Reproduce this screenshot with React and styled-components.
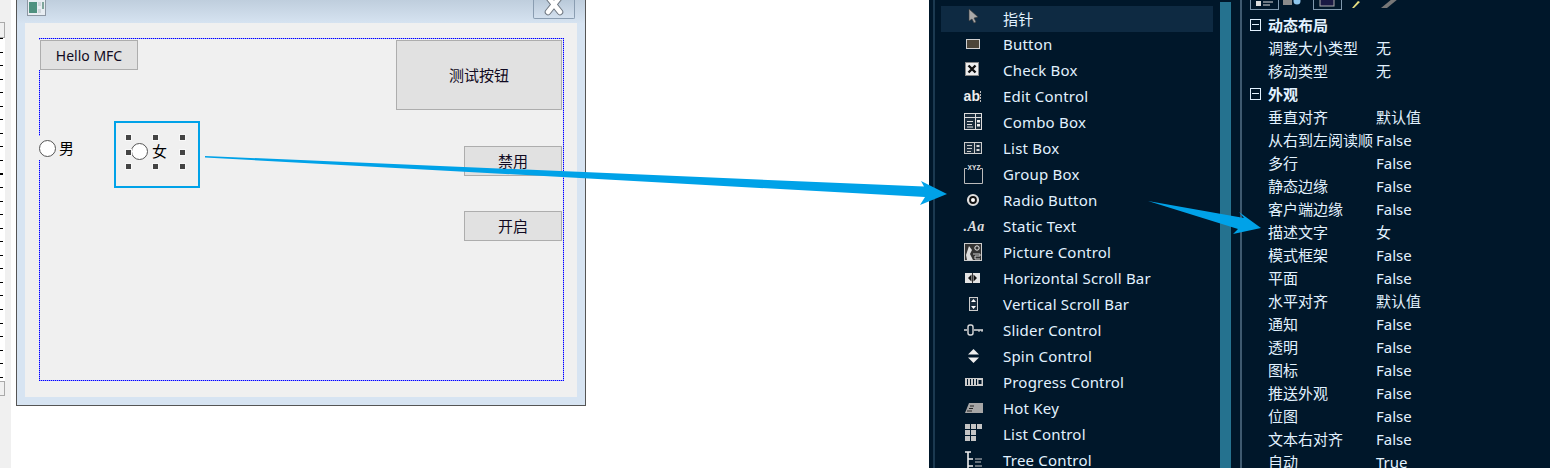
import React from "react";
import styled, { createGlobalStyle } from "styled-components";

const Global = createGlobalStyle`
  html, body { margin: 0; padding: 0; background: #fff; }
  body { font-family: "Noto Sans", "Noto Sans CJK SC", sans-serif; }
`;

const Page = styled.div`
  position: relative;
  display: flex;
  width: 1550px;
  height: 468px;
  overflow: hidden;
  background: #fff;
`;

/* ---------- designer ---------- */
const Designer = styled.div`
  display: flex;
  flex: 0 0 929px;
  height: 468px;
`;
const RulerColumn = styled.div`
  display: flex;
  flex-direction: column;
  flex: 0 0 11px;
  padding-top: 22px;
  box-sizing: border-box;
  background: #f0f0f0;
`;
const RulerEnd = styled.div`
  flex: 0 0 ${(p) => p.$h}px;
  width: 5px;
  box-sizing: border-box;
  border: 1px solid #a9a9a9;
  border-left: 0;
  background: #f0f0f0;
`;
const RulerTicks = styled.div`
  flex: 0 0 343px;
  width: 5px;
  background: repeating-linear-gradient(
    to bottom,
    #000 0, #000 1px, #fff 1px, #fff 13.55px
  ) 0 0 / 3px 100% no-repeat, #fff;
`;
const Gutter = styled.div`
  flex: 0 0 5px;
`;
const DialogWindow = styled.div`
  flex: 0 0 570px;
  height: 406px;
  box-sizing: border-box;
  border: 1px solid #555;
  border-top: 0;
  background: #d7e4f2;
  display: flex;
  flex-direction: column;
`;
const TitleBar = styled.div`
  flex: 0 0 23px;
  display: flex;
  justify-content: space-between;
  align-items: flex-start;
  padding: 0 10px 0 10px;
  background: linear-gradient(#bfcedd, #d6e3f1);
`;
const TitleIcon = styled.svg`
  display: block;
  width: 19px;
  height: 16px;
`;
const CloseButton = styled.div`
  width: 42px;
  height: 19px;
  box-sizing: border-box;
  border: 1px solid #8a9db1;
  border-top: 0;
  border-radius: 0 0 2px 2px;
  background: linear-gradient(#b9c9d9, #d3e0ee);
  overflow: hidden;
  display: flex;
  justify-content: center;
`;
const ClientArea = styled.div`
  position: relative;
  flex: 1;
  margin: 0 8px 8px;
  background: #f0f0f0;
`;
const dotsH = "repeating-linear-gradient(to right, #0000ff 0, #0000ff 1px, #9a9aff 1px, #9a9aff 2px)";
const dotsV = "repeating-linear-gradient(to bottom, #0000ff 0, #0000ff 1px, #9a9aff 1px, #9a9aff 2px)";
const Guide = styled.div`
  position: absolute;
  left: 14px;
  top: 15px;
  width: 525px;
  height: 343px;
  background:
    ${dotsH} 0 0 / 100% 1px no-repeat,
    ${dotsH} 0 100% / 100% 1px no-repeat,
    ${dotsV} 0 0 / 1px 100% no-repeat,
    ${dotsV} 100% 0 / 1px 100% no-repeat;
`;
const CtlButton = styled.div`
  position: absolute;
  left: ${(p) => p.$x - 25}px;
  top: ${(p) => p.$y - 23}px;
  width: ${(p) => p.$w}px;
  height: ${(p) => p.$h}px;
  box-sizing: border-box;
  border: 1px solid #adadad;
  background: #e1e1e1;
  display: flex;
  align-items: center;
  justify-content: center;
  color: #110a22;
  font-size: ${(p) => (p.$mask ? 14 : 15)}px;
  padding-bottom: ${(p) => (p.$mask ? 0 : 2)}px;
  ${(p) => (p.$mask ? "box-shadow: -1px 0 0 #f0f0f0;" : "")}
`;
const RadioCtl = styled.div`
  position: absolute;
  left: ${(p) => p.$x - 25}px;
  top: ${(p) => p.$y - 23}px;
  height: 24px;
  display: flex;
  align-items: center;
  gap: ${(p) => p.$gap}px;
  background: #f0f0f0;
  color: #000;
  font-size: 15px;
  line-height: 22px;
`;
const RadioDot = styled.span`
  width: 15px;
  height: 15px;
  border: 1px solid #555;
  border-radius: 50%;
  background: #fff;
  flex: none;
`;
const SelectionFrame = styled.div`
  position: absolute;
  left: 89px;
  top: 98px;
  width: 86px;
  height: 67px;
  box-sizing: border-box;
  border: 2px solid #00a2e8;
`;
const Handle = styled.span`
  position: absolute;
  left: ${(p) => p.$x - 116}px;
  top: ${(p) => p.$y - 123}px;
  width: 5px;
  height: 5px;
  background: #444;
  box-shadow: 0 0 0 1px #f8f8f8;
`;

/* ---------- dark panel ---------- */
const DarkPanel = styled.div`
  flex: 1;
  display: flex;
  height: 468px;
  background: #00172a;
  padding-left: 4px;
  color: #e2f2ff;
  font-size: 15px;
`;
const Stripe = styled.div`
  flex: 0 0 2px;
  background: ${(p) => p.$c};
`;
const ToolList = styled.div`
  flex: 0 0 272px;
  margin-left: 6px;
  padding-top: 6px;
`;
const ToolRow = styled.div`
  display: flex;
  align-items: center;
  height: 26px;
  box-sizing: border-box;
  padding-bottom: 2px;
  letter-spacing: 0.2px;
  background: ${(p) => (p.$active ? "#0e2a42" : "transparent")};
  white-space: nowrap;
`;
const ToolIcon = styled.svg`
  display: block;
  flex: none;
  width: 24px;
  height: 22px;
  margin: 0 18px 0 20px;
`;
const ScrollTrack = styled.div`
  flex: 0 0 11px;
  margin: 2px 9px 0 7px;
  background: #25728f;
`;
const Props = styled.div`
  flex: 1;
  min-width: 0;
`;
const PropToolbar = styled.div`
  height: 13px;
  padding-left: 8px;
  display: flex;
  align-items: flex-start;
  overflow: hidden;
`;
const PropRow = styled.div`
  display: grid;
  grid-template-columns: 26px 108px 1fr;
  align-items: center;
  height: 23px;
  white-space: nowrap;
`;
const MinusBox = styled.span`
  position: relative;
  justify-self: end;
  margin-right: 7px;
  width: 9px;
  height: 10px;
  border: 1px solid #e2f2ff;
  &::after {
    content: "";
    position: absolute;
    left: 1px;
    right: 1px;
    top: 4px;
    height: 1px;
    background: #e2f2ff;
  }
`;
const PropName = styled.span`
  grid-column: 2;
  font-weight: ${(p) => (p.$bold ? 700 : 400)};
  ${(p) => (p.$bold ? "grid-column: 2 / 4;" : "")}
`;
const PropValue = styled.span`
  grid-column: 3;
`;
const Overlay = styled.svg`
  position: absolute;
  left: 0;
  top: 0;
  pointer-events: none;
`;

const icons = {
  pointer: (
    <path d="M8 2 L8 14 L11 12 L13 16 L15 15 L13 11 L17 10 Z" fill="#a9a9a9" stroke="#3a3a3a" strokeWidth="0.6" />
  ),
  button: (
    <>
      <rect x="5" y="6" width="14" height="10" fill="#d0d0d0" />
      <rect x="6" y="7" width="12" height="8" fill="#4c4539" />
    </>
  ),
  check: (
    <>
      <rect x="4.5" y="3.5" width="13" height="13" fill="#eee" stroke="#888" />
      <path d="M7.5 6.5 L14.5 13.5 M14.5 6.5 L7.5 13.5" stroke="#111" strokeWidth="2.4" />
    </>
  ),
  edit: (
    <>
      <text x="2.5" y="16" fontSize="14" fontWeight="700" fontFamily="Liberation Sans, sans-serif" fill="#eee">ab</text>
      <path d="M19.5 6 V17" stroke="#bbb" strokeWidth="1" strokeDasharray="2 1" />
    </>
  ),
  combo: (
    <>
      <rect x="3.5" y="2.5" width="17" height="16" fill="#1a2c3c" stroke="#ddd" />
      <path d="M3 6.5 H21 M14.5 2 V19 M6 10.5 H12 M6 13.5 H11 M6 16 H12" stroke="#ddd" />
      <rect x="16" y="9" width="3" height="2.5" fill="#eee" />
      <rect x="16" y="13" width="3" height="2.5" fill="#eee" />
    </>
  ),
  list: (
    <>
      <rect x="3.5" y="5.5" width="17" height="11" fill="#1a2c3c" stroke="#ccc" />
      <path d="M13.5 5 V17 M6 8.5 H11 M6 11.5 H11 M6 14.5 H10" stroke="#ccc" />
      <rect x="15.5" y="8" width="3" height="2" fill="#ddd" />
      <rect x="15.5" y="12" width="3" height="2" fill="#ddd" />
    </>
  ),
  group: (
    <>
      <path d="M6 5.5 H3.5 V20.5 H21.5 V5.5 H19" fill="none" stroke="#bbb" />
      <text x="6.5" y="7" fontSize="6.5" fontWeight="700" fontFamily="Liberation Sans, sans-serif" fill="#e4e4e4">XYZ</text>
    </>
  ),
  radio: (
    <>
      <circle cx="12" cy="11" r="5" fill="#111" stroke="#ddd" strokeWidth="2.2" />
      <circle cx="12" cy="11" r="2" fill="#fff" />
    </>
  ),
  stat: (
    <text x="2.5" y="16" fontSize="14" fontWeight="700" fontStyle="italic" fontFamily="Liberation Serif, serif" fill="#ddd" letterSpacing="0.4">.Aa</text>
  ),
  picture: (
    <>
      <rect x="3.5" y="2.5" width="17" height="17" fill="#333" stroke="#ccc" />
      <path d="M5 14 L8 5 L11 9 L9 13 L12 19 H6 Z" fill="#ddd" />
      <circle cx="16" cy="7" r="2.2" fill="none" stroke="#eee" />
      <path d="M12 13 H19 V15 H14 V18 H19" stroke="#ccc" fill="none" />
    </>
  ),
  hscroll: (
    <>
      <rect x="4" y="6" width="15" height="10" fill="#e4e4e4" />
      <path d="M7 11 L10.5 7.5 V14.5 Z M16 11 L12.5 7.5 V14.5 Z" fill="#111" />
      <path d="M11.5 6 V16" stroke="#333" />
    </>
  ),
  vscroll: (
    <>
      <rect x="8.5" y="4.5" width="8" height="13" fill="#1a2c3c" stroke="#ccc" />
      <path d="M12.5 6 L15 9 H10 Z M12.5 16 L15 13 H10 Z" fill="#fff" />
    </>
  ),
  slider: (
    <>
      <path d="M3 11 H6 M13 11 H22" stroke="#ddd" strokeWidth="1.6" />
      <rect x="7" y="6" width="5" height="10" rx="2" fill="none" stroke="#ddd" strokeWidth="1.4" />
      <path d="M18 11 V13 M21 11 V13" stroke="#ddd" />
    </>
  ),
  spin: (
    <>
      <path d="M12.5 4 L18 9.5 H7 Z" fill="#eee" />
      <path d="M12.5 18 L18 12.5 H7 Z" fill="#eee" />
    </>
  ),
  progress: (
    <>
      <rect x="4" y="7" width="18" height="8" fill="#ccc" />
      <path d="M6.5 8 V14 M9.5 8 V14 M12.5 8 V14 M15.5 8 V14" stroke="#00172a" strokeWidth="1" />
      <rect x="17.5" y="9" width="3" height="4" fill="#00172a" />
    </>
  ),
  hotkey: (
    <>
      <path d="M8 6 H22 V16 H4 Z" fill="#a6a6a6" />
      <path d="M9 9 H13 M8 11.5 H12 M6 14 H11" stroke="#222" strokeWidth="1" />
    </>
  ),
  listctl: (
    <>
      {[4, 10, 16].map((x) =>
        [1, 7, 13].map((y) =>
          x === 16 && y > 1 ? null : <rect key={`${x}-${y}`} x={x} y={y} width="5" height="5" fill="#c4c4c4" />
        )
      )}
    </>
  ),
  tree: (
    <>
      <path d="M4 3 H10 M7 3 V22 M7 10 H12 M7 17 H12" stroke="#eee" strokeWidth="1.6" fill="none" />
      <path d="M14 10 H21 M14 13 H20 M14 17 H21" stroke="#ccc" />
    </>
  ),
};

const tools = [
  ["pointer", "指针"], ["button", "Button"], ["check", "Check Box"], ["edit", "Edit Control"],
  ["combo", "Combo Box"], ["list", "List Box"], ["group", "Group Box"], ["radio", "Radio Button"],
  ["stat", "Static Text"], ["picture", "Picture Control"], ["hscroll", "Horizontal Scroll Bar"],
  ["vscroll", "Vertical Scroll Bar"], ["slider", "Slider Control"], ["spin", "Spin Control"],
  ["progress", "Progress Control"], ["hotkey", "Hot Key"], ["listctl", "List Control"], ["tree", "Tree Control"],
];

const props = [
  ["动态布局"], ["调整大小类型", "无"], ["移动类型", "无"], ["外观"], ["垂直对齐", "默认值"],
  ["从右到左阅读顺", "False"], ["多行", "False"], ["静态边缘", "False"], ["客户端边缘", "False"],
  ["描述文字", "女"], ["模式框架", "False"], ["平面", "False"], ["水平对齐", "默认值"], ["通知", "False"],
  ["透明", "False"], ["图标", "False"], ["推送外观", "False"], ["位图", "False"], ["文本右对齐", "False"], ["自动", "True"],
];

const handles = [
  [126, 135], [153, 135], [180, 135],
  [126, 150], [180, 150],
  [126, 164], [153, 164], [180, 164],
];

export default function App() {
  return (
    <Page>
      <Global />
      <Designer>
        <RulerColumn>
          <RulerEnd $h={16} />
          <RulerTicks />
          <RulerEnd $h={15} />
        </RulerColumn>
        <Gutter />
        <DialogWindow>
          <TitleBar>
            <TitleIcon viewBox="0 0 19 16">
              <rect x="0.5" y="-2" width="18" height="17.5" fill="#e8edf2" stroke="#8d97a3" />
              <rect x="2" y="2" width="8" height="11" fill="#4f9180" />
              <rect x="11" y="2" width="3" height="4" fill="#cfd6dc" />
              <rect x="15" y="2" width="2" height="7" fill="#7ea59a" />
              <rect x="11" y="9" width="3" height="4" fill="#cfd6dc" />
            </TitleIcon>
            <CloseButton>
              <svg width="20" height="18" viewBox="0 0 20 18">
                <path d="M4 -3 L16 12 M16 -3 L4 12" stroke="#6f7780" strokeWidth="6.5" strokeLinecap="round" />
                <path d="M4 -3 L16 12 M16 -3 L4 12" stroke="#fff" strokeWidth="4.5" strokeLinecap="round" />
              </svg>
            </CloseButton>
          </TitleBar>
          <ClientArea>
            <Guide />
            <CtlButton $x={40} $y={40} $w={98} $h={30} $mask>Hello MFC</CtlButton>
            <CtlButton $x={396} $y={40} $w={166} $h={70}>测试按钮</CtlButton>
            <CtlButton $x={464} $y={146} $w={98} $h={30}>禁用</CtlButton>
            <CtlButton $x={464} $y={211} $w={98} $h={30}>开启</CtlButton>
            <RadioCtl $x={39} $y={136} $gap={3}><RadioDot />男</RadioCtl>
            <RadioCtl $x={131} $y={139} $gap={4}><RadioDot />女</RadioCtl>
            <SelectionFrame>
              {handles.map(([x, y]) => <Handle key={`${x}-${y}`} $x={x} $y={y} />)}
            </SelectionFrame>
          </ClientArea>
        </DialogWindow>
      </Designer>
      <DarkPanel>
        <Stripe $c="#1b3950" />
        <ToolList>
          {tools.map(([icon, label], i) => (
            <ToolRow key={label} $active={i === 0}>
              <ToolIcon viewBox="0 0 24 22">{icons[icon]}</ToolIcon>
              {label}
            </ToolRow>
          ))}
        </ToolList>
        <ScrollTrack />
        <Stripe $c="#3f5a70" />
        <Props>
          <PropToolbar>
            <svg width="160" height="13" viewBox="0 0 160 13">
              <rect x="0.5" y="-3" width="28" height="12.5" fill="none" stroke="#7f98ad" />
              <rect x="6" y="1" width="5" height="5" fill="#ddd" />
              <path d="M13 2 H23 M13 5 H20" stroke="#ddd" />
              <rect x="33" y="0" width="9" height="5" fill="#8a8a8a" />
              <circle cx="47" cy="1" r="3.5" fill="#8fc6ec" />
              <rect x="63.5" y="-3" width="28" height="12.5" fill="none" stroke="#7f98ad" />
              <rect x="70" y="-1" width="14" height="7" fill="#1a1a44" stroke="#aaa" />
              <path d="M102 8 L108 1 L110 2 L104 8 Z" fill="#e8e080" />
              <path d="M131 8 L142 -1 L148 -1 L137 8 Z" fill="#777" />
            </svg>
          </PropToolbar>
          {props.map(([name, value]) =>
            value ? (
              <PropRow key={name}>
                <PropName>{name}</PropName>
                <PropValue>{value}</PropValue>
              </PropRow>
            ) : (
              <PropRow key={name}>
                <MinusBox />
                <PropName $bold>{name}</PropName>
              </PropRow>
            )
          )}
        </Props>
      </DarkPanel>
      <Overlay width="1550" height="468" viewBox="0 0 1550 468">
        <polygon points="205,156 924,186.5 921,181 947,194 920,205 925,197 205,157.5" fill="#00a2e8" />
        <polygon points="1148,201 1244,218 1239,212 1261,228 1233,234 1238,229" fill="#00a2e8" />
      </Overlay>
    </Page>
  );
}
